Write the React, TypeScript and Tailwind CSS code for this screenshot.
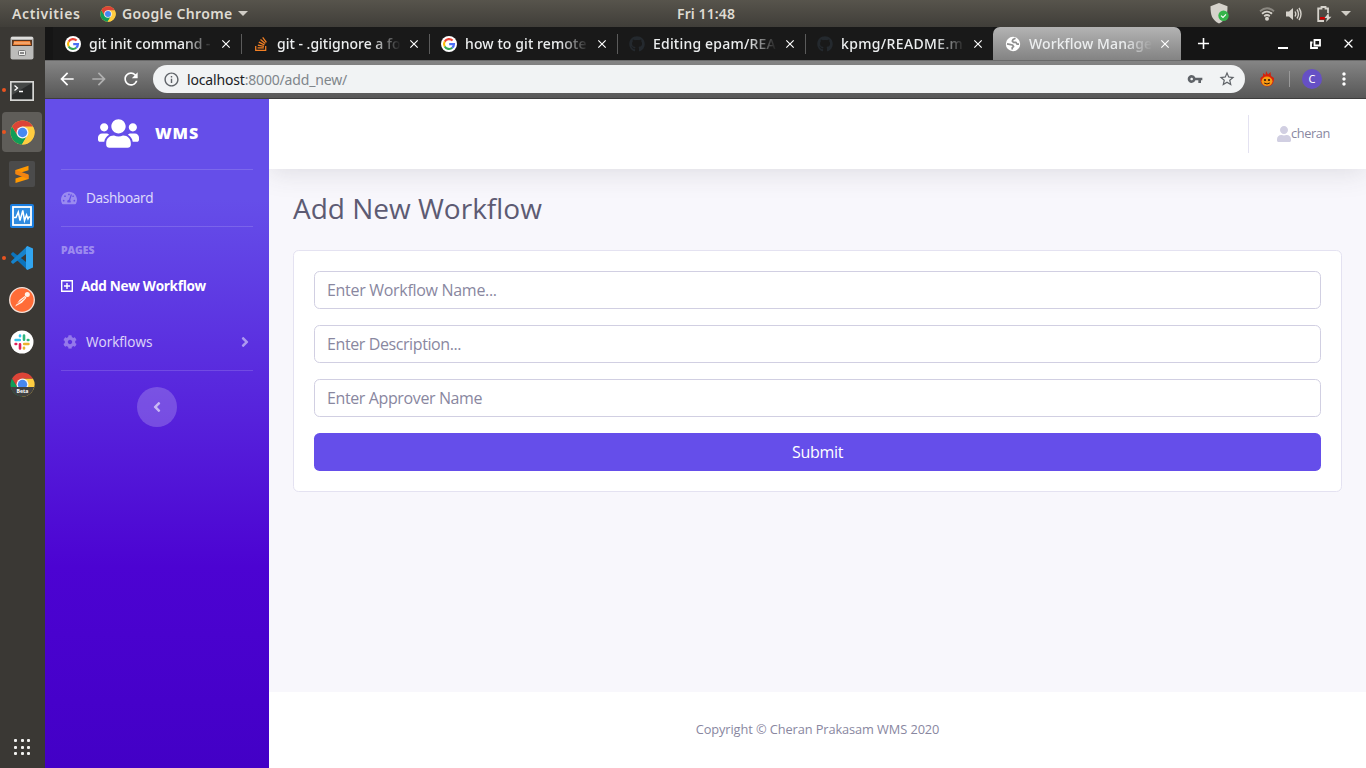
import type { ReactNode } from "react";
import { FaUsers, FaTachometerAlt, FaCog, FaUser, FaAngleRight, FaAngleLeft, FaStackOverflow, FaGithub } from "react-icons/fa";
import { MdArrowBack, MdArrowForward, MdRefresh, MdInfoOutline, MdVpnKey, MdStarBorder, MdMoreVert, MdClose, MdAdd } from "react-icons/md";

const UI = "font-['Noto_Sans','Open_Sans',sans-serif]";
const BODY = "font-['Open_Sans','Noto_Sans',sans-serif]";

function ChromeLogo({ size, beta = false }: { size: number; beta?: boolean }) {
  return (
    <svg width={size} height={size} viewBox="0 0 48 48" className="shrink-0">
      <circle cx="24" cy="24" r="23" fill={beta ? "#414141" : "#fc4"} />
      <path d="M4 12.5A23 23 0 0 0 23 47L33.5 29 24 24 14 29Z" fill="#109d58" />
      <path d="M24 12.5H44A23 23 0 0 1 23 47L34 29Z" fill="#ffcd40" />
      <path d="M4 12.5A23 23 0 0 1 44 12.5H24L14 29Z" fill="#dc4437" />
      <circle cx="24" cy="24" r="11.5" fill="#f4f4f4" />
      <circle cx="24" cy="24" r="9" fill="#4688f1" />
      {beta && <path d="M1.5 29A23 23 0 0 0 46.5 29Z" fill="#414141" />}
      {beta && <text x="24" y="40" textAnchor="middle" fontSize="10" fontWeight="700" fill="#fff" fontFamily="Open Sans">Beta</text>}
    </svg>
  );
}

function GoogleIcon() {
  return (
    <svg width="16" height="16" viewBox="0 0 16 16">
      <circle cx="8" cy="8" r="8" fill="#fff" />
      <g fill="none" strokeWidth="2.1">
        <path d="M11.6 4.6A5 5 0 0 0 3.7 5.6" stroke="#ea4335" />
        <path d="M3.7 5.5A5 5 0 0 0 3.7 10.5" stroke="#fbbc05" />
        <path d="M3.7 10.4A5 5 0 0 0 11.3 11.8" stroke="#34a853" />
        <path d="M8.2 8.1H13A5 5 0 0 1 11.2 11.8" stroke="#4c6ff5" />
      </g>
    </svg>
  );
}

function GlobeIcon() {
  return (
    <svg width="16" height="16" viewBox="0 0 16 16">
      <circle cx="8" cy="8" r="7.2" fill="#fff" />
      <g fill="none" stroke="#8f8f8f" strokeWidth="1.7" strokeLinejoin="round">
        <path d="M10.5 2.3 8 3.6 7.3 5.2 8.5 6.3 11 6.4 12 8.2H14" />
        <path d="M2 7.8 4.5 8.3 7.5 9 8.6 10.6 7.2 11.6V13.6" />
      </g>
    </svg>
  );
}

function Files() {
  return (
    <svg width="24" height="24" viewBox="0 0 24 24">
      <rect x="0.5" y="0.5" width="23" height="23" rx="2" fill="#b5b5b3" />
      <rect x="1" y="1" width="22" height="2" rx="1" fill="#dededc" />
      <rect x="2" y="4" width="20" height="6" fill="#58351f" />
      <path d="M3 9 4 5H20L21 9Z" fill="#ef8035" />
      <path d="M4 7H20" stroke="#f8c9a0" />
      <rect x="1" y="10" width="22" height="13" fill="#bcbcba" />
      <rect x="8.5" y="14.5" width="7" height="5" rx="1" fill="#f0f0ee" stroke="#777" />
      <path d="M10 17H14" stroke="#666" strokeWidth="1.5" />
    </svg>
  );
}
function Terminal() {
  return (
    <svg width="24" height="20" viewBox="0 0 24 20" className="mt-px">
      <rect width="24" height="20" fill="#d6d6d4" />
      <rect x="1.7" y="1.7" width="20.6" height="16.6" fill="#292b2b" />
      <path d="M2 2H22L2 14Z" fill="#444746" />
      <path d="M4.5 4.5 7.5 7 4.5 9.5M9 10.5H13" fill="none" stroke="#fff" strokeWidth="1.3" />
    </svg>
  );
}
function Sublime() {
  return (
    <svg width="26" height="26" viewBox="0 0 26 26">
      <rect width="26" height="26" rx="2" fill="#4b4b4b" />
      <path d="M6.5 9 19.5 4.8V9.2L12 11.6 19.5 14V18L6.5 22V17.6L14 15.1 6.5 12.8Z" fill="#ff9800" />
      <path d="M6.5 9 19.5 13.4V18L6.5 13.3Z" fill="#f28411" />
    </svg>
  );
}
function Monitor() {
  return (
    <svg width="24" height="24" viewBox="0 0 24 24">
      <rect width="24" height="24" rx="2" fill="#1a7ee0" />
      <rect x="3" y="3" width="18" height="18" fill="#2f8be0" stroke="#fff" strokeWidth="1.8" />
      <path d="M4 13.5H6L8.3 8 10 16.5 12.8 6.5 14.5 16.5 16.5 11 18 15 19 13H20" fill="none" stroke="#fff" strokeWidth="1.5" />
    </svg>
  );
}
function Code() {
  return (
    <svg width="24" height="24" viewBox="0 0 24 24">
      <path d="M1.2 7.4 3 6 17.4 17V24L1.2 8.8Z" fill="#0b74bd" />
      <path d="M1.2 16.6 3 18 17.4 7V0L1.2 15.2Z" fill="#1683cc" />
      <path d="M17.3 0 23 2.5V21.5L17.3 24 16 22.8V1.2Z" fill="#31a5f0" />
    </svg>
  );
}
function Postman() {
  return (
    <svg width="26" height="26" viewBox="0 0 26 26">
      <circle cx="13" cy="13" r="12.3" fill="#ff6c37" stroke="#f5e2da" strokeWidth="1.3" />
      <path d="M6 19.5 10.5 13 15.7 9 17.5 10.7 13 15.8Z" fill="#fff3e9" />
      <circle cx="18.3" cy="7.5" r="2.5" fill="#fff3e9" />
      <path d="M8 17 15.8 10.8" stroke="#ff6c37" strokeWidth="0.8" />
    </svg>
  );
}
function Slack() {
  return (
    <svg width="24" height="24" viewBox="0 0 24 24">
      <circle cx="12" cy="12" r="11.5" fill="#fff" />
      <g strokeWidth="2.6" strokeLinecap="round">
        <path d="M5.6 10H9.8M10 5.6V6.2" stroke="#36c5f0" />
        <path d="M14 5.6V9.8M17.8 10H18.4" stroke="#2eb67d" />
        <path d="M10 14.2V18.4M5.6 14H6.2" stroke="#e01e5a" />
        <path d="M14.2 14H18.4M14 17.8V18.4" stroke="#ecb22e" />
      </g>
    </svg>
  );
}

const dock: { icon: ReactNode; running?: boolean; active?: boolean }[] = [
  { icon: <Files /> },
  { icon: <Terminal />, running: true },
  { icon: <ChromeLogo size={25} />, running: true, active: true },
  { icon: <Sublime /> },
  { icon: <Monitor /> },
  { icon: <Code />, running: true },
  { icon: <Postman /> },
  { icon: <Slack /> },
  { icon: <ChromeLogo size={25} beta /> },
];

function Dock() {
  return (
    <aside className="flex w-[45px] shrink-0 flex-col justify-between bg-[#3a3834] pb-[13px] pt-px">
      <div className="flex flex-col gap-[2px]">
        {dock.map((d, i) => (
          <div key={i} className="relative flex h-10 w-[44px] items-center justify-center">
            {d.running && <span className="absolute left-[2px] top-[18px] size-1 rounded-full bg-[#e95420]" />}
            <div className={d.active ? "flex size-10 items-center justify-center rounded-[4px] bg-[#5f5d59]" : "flex size-10 items-center justify-center"}>{d.icon}</div>
          </div>
        ))}
      </div>
      <div className="grid w-[44px] grid-cols-[3px_3px_3px] justify-center gap-[3.5px]">
        {Array.from({ length: 9 }, (_, i) => <span key={i} className="size-[3px] rounded-[1px] bg-[#f2f2f0]" />)}
      </div>
    </aside>
  );
}

function TopPanel() {
  return (
    <header className={`${UI} grid h-[27px] shrink-0 grid-cols-[1fr_60px_1fr] items-center bg-linear-to-b from-[#57544c] to-[#403e39] text-[14px] font-semibold text-[#dfdbd2]`}>
      <div className="flex items-center pl-3">
        <span className="w-[88px] tracking-[0.6px]">Activities</span>
        <ChromeLogo size={16} />
        <span className="ml-[6px] w-[112px] whitespace-nowrap tracking-[0.35px]">Google Chrome</span>
        <svg width="10" height="5" viewBox="0 0 10 5" className="ml-[4px]"><path d="M0 0H10L5 5Z" fill="#d0cdc6" /></svg>
      </div>
      <span className="ml-[24px] whitespace-nowrap text-[14px] tracking-[0.1px]">Fri 11:48</span>
      <div className="flex items-center justify-end pr-[15px]">
        <svg width="20" height="21" viewBox="0 0 20 21" className="mr-[29px]">
          <path d="M9 0 17.5 3.2C17.5 12 16 17 9 20.5 2 17 0.5 12 0.5 3.2Z" fill="#d5d2cb" />
          <circle cx="13.5" cy="12.7" r="5.2" fill="#35b44a" />
          <path d="M11 12.6 13 14.5 16 11.3" fill="none" stroke="#fff" strokeWidth="1.1" />
        </svg>
        <svg width="16" height="14" viewBox="0 0 16 14" className="mr-[11px]" fill="none" strokeWidth="1.8">
          <path d="M1 4.3Q8-1.8 15 4.3" stroke="#8a8780" />
          <path d="M3 6.8Q8 2.4 13 6.8M5.2 9.2Q8 6.8 10.8 9.2" stroke="#d5d2cb" />
          <circle cx="8" cy="11.7" r="2" fill="#d5d2cb" />
        </svg>
        <svg width="16" height="14" viewBox="0 0 16 14" className="mr-[15px]">
          <path d="M0 4.5H3L7 1V13L3 9.5H0Z" fill="#d5d2cb" />
          <path d="M9 4.5Q10.5 7 9 9.5M11 2.5Q14 7 11 11.5M13 1Q17 7 13 13" fill="none" stroke="#d5d2cb" strokeWidth="1.4" />
        </svg>
        <svg width="15" height="16" viewBox="0 0 15 16" className="mr-[9px]">
          <path d="M11 7V2.5H8.5V1H4.5V2.5H1.2V15H7" fill="none" stroke="#d5d2cb" strokeWidth="1.8" />
          <rect x="3" y="11" width="5" height="2.5" fill="#cc0000" />
          <path d="M11.5 7 7.5 12H10L9 16 14.5 10.7H12Z" fill="#d5d2cb" />
        </svg>
        <svg width="10" height="5" viewBox="0 0 10 5"><path d="M0 0H10L5 5Z" fill="#d0cdc6" /></svg>
      </div>
    </header>
  );
}

const tabs: { title: string; icon: ReactNode; cls: string }[] = [
  { title: "git init command -", icon: <GoogleIcon />, cls: "tracking-[-0.05px]" },
  { title: "git - .gitignore a fo", icon: <FaStackOverflow size={16} color="#f48024" />, cls: "tracking-[0px]" },
  { title: "how to git remote", icon: <GoogleIcon />, cls: "tracking-[0.1px]" },
  { title: "Editing epam/REA", icon: <FaGithub size={16} color="#24292e" />, cls: "tracking-[0.2px]" },
  { title: "kpmg/README.m", icon: <FaGithub size={16} color="#24292e" />, cls: "tracking-[0.35px]" },
  { title: "Workflow Manage", icon: <GlobeIcon />, cls: "tracking-[0.1px]" },
];

function TabStrip() {
  return (
    <div className={`${UI} flex h-[33px] shrink-0 bg-[#151515] pl-[8px] text-[14px] font-medium text-[#eceeef]`}>
      {tabs.map((t, i) => {
        const active = i === tabs.length - 1;
        return (
          <div key={i} className={active
            ? "flex w-[188px] items-center rounded-t-[7px] bg-linear-to-b from-[#b4b4b4] to-[#838383]"
            : "flex w-[188px] items-center bg-[#191919]"}>
            <span className={i > 0 && !active ? "h-5 w-px shrink-0 bg-[#5b5b5b]" : "w-px shrink-0"} />
            <span className="ml-[11px] w-6 shrink-0">{t.icon}</span>
            <span className={`${t.cls} w-[125px] shrink-0 whitespace-nowrap [mask-image:linear-gradient(to_right,#000_76%,transparent_99%)]`}>{t.title}</span>
            <MdClose size={14} className={active ? "ml-[4px] shrink-0 text-white" : "ml-[5px] shrink-0 text-white"} />
          </div>
        );
      })}
      <div className="flex w-[44px] items-center justify-center text-white"><MdAdd size={19} /></div>
      <div className="ml-auto flex items-center pr-[10px] text-white">
        <span className="mr-[22px] mt-[9px] h-[2px] w-[10px] bg-white" />
        <svg width="11" height="10" viewBox="0 0 11 10" className="mr-[20px]" fill="none" stroke="#fff" strokeWidth="1.8">
          <path d="M4.5 1H10V6.5H4.5ZM2.5 3.5H1V9H7V8" />
        </svg>
        <MdClose size={15} />
      </div>
    </div>
  );
}

function Toolbar() {
  return (
    <div className={`${UI} flex h-[39px] shrink-0 items-center border-b border-[#3d3d3d] border-t border-t-[#6a6a6a] bg-linear-to-b from-[#858585] to-[#575757] pb-px pl-[12px] text-white`}>
      <MdArrowBack size={20} />
      <MdArrowForward size={20} className="ml-[12px] text-[#b0b0b0]" />
      <MdRefresh size={20} className="ml-[12px]" />
      <div className="ml-[12px] flex h-7 w-[1092px] items-center rounded-full bg-[#f1f3f4] pl-[10px] pr-[9px] text-[#5f6368]">
        <MdInfoOutline size={17} />
        <span className="ml-[7px] text-[14px] tracking-[-0.17px] text-[#80868b]"><span className="text-[#202124]">localhost</span>:8000/add_new/</span>
        <MdVpnKey size={16} className="ml-auto" />
        <MdStarBorder size={18} className="ml-[15px]" />
      </div>
      <svg width="14" height="16" viewBox="0 0 14 16" className="ml-[15px]">
        <path d="M6 0 8 3.5 10.5 1 11 5 14 7Q14 15 7 15.5 0 15 0.5 7L3 5V2L5.5 4Z" fill="#d6210b" />
        <ellipse cx="7" cy="10.3" rx="5.5" ry="4.8" fill="#f79a13" />
        <circle cx="5" cy="9" r="1.1" fill="#30160b" /><circle cx="9" cy="9" r="1.1" fill="#30160b" />
        <path d="M4.2 12Q7 14 9.8 12" fill="none" stroke="#30160b" />
      </svg>
      <span className="ml-[15px] h-4 w-px bg-[#999]" />
      <span className="ml-[12px] flex size-5 items-center justify-center rounded-full bg-[#6650c5] text-[11px]">C</span>
      <MdMoreVert size={20} className="ml-[12px]" />
    </div>
  );
}

function Sidebar() {
  const rule = "mx-4 h-px shrink-0 bg-white/15";
  return (
    <nav className={`${BODY} flex w-[224px] shrink-0 flex-col bg-linear-to-b/srgb from-[#654ee9] from-15% via-[#4c03d2] via-70% to-[#4300c6] text-white/80`}>
      <div className="flex h-[70px] shrink-0 items-center pb-[2px] pl-[53px] text-white">
        <FaUsers size={41} />
        <span className="ml-[16px] text-[16px] font-extrabold tracking-[0.9px]">WMS</span>
      </div>
      <div className={rule} />
      <div className="flex h-14 shrink-0 items-center pl-4 text-[13.6px] tracking-[-0.32px]">
        <FaTachometerAlt size={16} className="text-white/35" />
        <span className="ml-[9px]">Dashboard</span>
      </div>
      <div className={rule} />
      <div className="h-[31px] shrink-0 px-4 pt-4 text-[10.4px] font-extrabold leading-[15px] text-white/40">PAGES</div>
      <div className="flex h-[56px] shrink-0 items-center pl-4 text-[13.6px] font-bold tracking-[-0.32px] text-white">
        <svg width="12" height="12" viewBox="0 0 12 12" fill="none" stroke="#fff" strokeWidth="1.4"><path d="M.7.7H11.3V11.3H.7ZM6 3V9M3 6H9" /></svg>
        <span className="ml-[8px]">Add New Workflow</span>
      </div>
      <div className="flex h-14 shrink-0 items-center pl-[18px] pr-[16px] text-[13.6px] tracking-[-0.03px]">
        <FaCog size={14} className="text-white/35" />
        <span className="ml-[9px]">Workflows</span>
        <FaAngleRight size={16} className="ml-auto text-white/50" />
      </div>
      <div className={rule} />
      <button className="mt-4 flex size-10 shrink-0 items-center justify-center self-center rounded-full bg-white/20 text-white/60"><FaAngleLeft size={16} /></button>
    </nav>
  );
}

export default function App() {
  const field = "block h-[38px] w-full rounded-[5.6px] border border-[#d1cfe2] bg-white px-3 pb-px text-[16px] placeholder:text-[#89879f] placeholder:opacity-100 outline-none";
  return (
    <div className="flex h-screen w-screen flex-col overflow-hidden">
      <TopPanel />
      <div className="flex min-h-0 flex-1">
        <Dock />
        <div className="flex min-w-0 flex-1 flex-col">
          <TabStrip />
          <Toolbar />
          <div className="flex min-h-0 flex-1">
            <Sidebar />
            <div className={`${BODY} flex min-w-0 flex-1 flex-col overflow-hidden bg-[#f8f7fc] text-[#89879f]`}>
              <header className="flex h-[70px] shrink-0 items-center justify-end bg-white pb-px pr-9 shadow-[0_2.4px_28px_0_rgba(58,59,69,0.15)]">
                <span className="mr-[28px] h-[38px] w-px bg-[#e4e2f1]" />
                <FaUser size={16} className="-ml-px text-[#d1cfe2]" />
                <span className="-ml-px w-[39px] whitespace-nowrap text-[12.8px] tracking-[-0.4px]">cheran</span>
              </header>
              <main className="flex-1 px-6 pt-[22px]">
                <h1 className="h-[34px] whitespace-nowrap text-[28px] font-normal leading-[34px] tracking-[0px] text-[#5d5b73]">Add New Workflow</h1>
                <form className="mt-[25px] flex h-[242px] flex-col gap-4 rounded-[5.6px] border border-[#e4e2f1] bg-white p-5">
                  <input className={`${field} tracking-[-0.3px]`} placeholder="Enter Workflow Name..." />
                  <input className={`${field} tracking-[-0.4px]`} placeholder="Enter Description..." />
                  <input className={`${field} tracking-[-0.38px]`} placeholder="Enter Approver Name" />
                  <button type="button" className="h-[38px] shrink-0 rounded-[5.6px] bg-[#654eea] pb-px text-[16px] tracking-[-0.3px] text-white">Submit</button>
                </form>
              </main>
              <footer className="flex h-[76px] shrink-0 items-center justify-center bg-white text-[12.8px] tracking-[-0.09px]">Copyright © Cheran Prakasam WMS 2020</footer>
            </div>
          </div>
        </div>
      </div>
    </div>
  );
}
